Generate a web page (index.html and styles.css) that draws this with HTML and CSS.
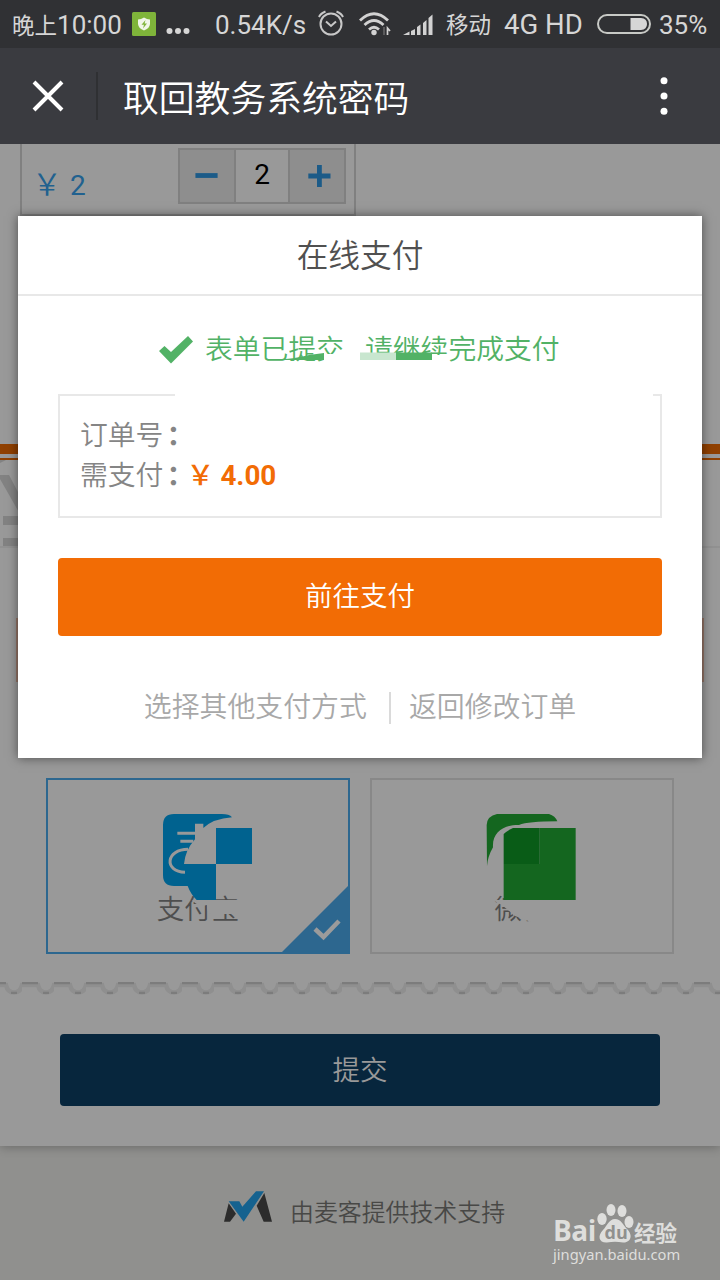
FILE: index.html
```html
<!DOCTYPE html>
<html lang="zh-CN">
<head>
<meta charset="utf-8">
<title>取回教务系统密码</title>
<link rel="stylesheet" href="styles.css">
</head>
<body>
<header class="status">
  <span class="time"><span class="cn">晚上</span>10:00</span>
  <svg class="shield" width="24" height="24" viewBox="0 0 24 24"><rect width="24" height="24" rx="1.5" fill="#7fb43a"/><path d="M12 5.500Q15 7.300 18 7.500V12Q17.500 16.500 12 18.500Q6.500 16.500 6 12V7.500Q9 7.300 12 5.500Z" fill="#f0f6e8"/><path d="M13.500 8L9.500 12.800H12L11 16.500L15 11.500H12.600Z" fill="#7fb43a"/></svg>
  <svg class="more" width="24" height="8" viewBox="0 0 24 8" fill="#d6d6d6"><circle cx="3.500" cy="4" r="3"/><circle cx="12" cy="4" r="3"/><circle cx="20.500" cy="4" r="3"/></svg>
  <span class="speed">0.54K/s</span>
  <svg class="alarm" width="26" height="26" viewBox="0 0 26 26" fill="none" stroke="#c8c8c8" stroke-width="2"><circle cx="13" cy="14" r="10.500"/><path d="M8 11.500L13 16L18 11.500M1 7Q2.500 3.500 7.500 1.500M25 7Q23.500 3.500 18.500 1.500"/></svg>
  <svg class="wifi" width="32" height="26" viewBox="0 0 32 26" fill="none" stroke="#d2d2d2" stroke-width="2.800"><path d="M1 9.500Q15 -4 29 9.500M5.500 14Q15 5 24.500 14M10 18.500Q15 14 20 18.500"/><circle cx="15" cy="21.500" r="2.700" fill="#d2d2d2" stroke="none"/><path d="M25 16V24" stroke="#5a5a5c" stroke-width="2"/><path d="M28.500 24V17L31 20" stroke-width="1.700"/></svg>
  <svg class="signal" width="30" height="22" viewBox="0 0 30 22" fill="#d2d2d2"><path d="M0 21L6.500 17.500V21ZM8 17L12 15V21H8ZM14 13L17.500 10.500V21H14ZM20 9L23.500 6V21H20ZM25.500 4L29.500 .5V21H25.500Z"/></svg>
  <span class="carrier">移动</span>
  <span class="net">4G HD</span>
  <svg class="battery" width="54" height="20" viewBox="0 0 54 20"><rect x="1" y="1" width="52" height="18" rx="9" fill="none" stroke="#c8cac6" stroke-width="2"/><path d="M33.500 4H44Q50 4.500 50 10T44 16H33.500Z" fill="#d6d6d6"/></svg>
  <span class="pct">35%</span>
</header>
<nav class="titlebar">
  <svg class="close" width="32" height="32" viewBox="0 0 32 32" stroke="#fff" stroke-width="4"><path d="M2 2L30 30M30 2L2 30"/></svg>
  <i class="rule"></i>
  <h1>取回教务系统密码</h1>
  <svg width="8" height="38" viewBox="0 0 8 38" fill="#fff"><circle cx="4" cy="3.700" r="3.500"/><circle cx="4" cy="19" r="3.500"/><circle cx="4" cy="34.300" r="3.500"/></svg>
</nav>
<main class="stage">
  <div class="paper">
    <section class="product">
      <span class="price"><span class="yen">￥</span>2</span>
      <div class="stepper">
        <svg viewBox="0 0 56 52"><path d="M16 25.500H39" stroke="#1c5b88" stroke-width="5"/></svg>
        <span>2</span>
        <svg viewBox="0 0 56 52"><path d="M19 26H42M30.500 14.500V37.500" stroke="#1c5b88" stroke-width="5"/></svg>
      </div>
    </section>
    <div class="stripe"></div>
    <section class="total">
      <svg width="20" height="86" viewBox="0 0 20 86" fill="#828282"><path d="M0 15H9L20 36V54L0 19ZM3 56H20V65H3ZM3 78H20V86H3ZM0 0H6L0 3Z"/></svg>
    </section>
    <div class="notice"></div>
    <section class="methods">
      <div class="method chosen">
        <svg class="brand" width="92" height="90" viewBox="396 159 276 270"><path fill="#00628f" d="M399 195Q399 162 432 162H575Q598 162 606 172Q550 176 520 204V191H495V238Q466 270 462 312H558V204H666V312H558V420H500Q482 402 473 378H432Q399 378 399 345Z"/><path d="M442 220H497M451 244H490M474 268C408 268 400 334 465 337" fill="none" stroke="#999" stroke-width="9"/></svg>
        <span>支付宝</span>
        <svg class="veil" width="84" height="22" viewBox="0 0 84 22" fill="#999"><path d="M35 0H84V14H54Q50 14 50 5Q42 8 35 0Z"/></svg>
        <svg class="corner" width="70" height="70" viewBox="0 0 70 70"><path d="M70 0V70H0Z" fill="#2d678f"/><path d="M35 45L43.500 53L59 37" fill="none" stroke="#9b9b9b" stroke-width="4.500"/></svg>
      </div>
      <div class="method">
        <svg class="brand" width="92" height="90" viewBox="379 159 276 270"><path fill="#14661f" d="M381 195Q382 168 412 162H568Q587 168 593 184Q505 184 478 195C435 194 397 215 400 262Q384 290 382 318ZM540 204H648V420H432V312H540Z"/><path fill="#095c17" d="M460 204H540V312H432V222Q445 211 460 204Z"/></svg>
        <span>微信</span>
        <svg class="veil" width="84" height="22" viewBox="0 0 84 22" fill="#999"><path d="M12 0H84V22H50L34 16Q27 10 22 6L12 0Z"/></svg>
      </div>
    </section>
    <svg class="scallop" width="720" height="14" viewBox="0 0 720 14">
      <defs><pattern id="bump" x="22" width="32" height="14" patternUnits="userSpaceOnUse"><path d="M-1 3H16C17 8 20 10.500 24 10.500S31 8 32 3H33" fill="none" stroke="#8f8f8f" stroke-width="4.500"/><path d="M0 1.200H16M21 10.800H27" fill="none" stroke="#7c7c7c" stroke-width="2.200"/></pattern></defs>
      <rect width="720" height="14" fill="url(#bump)"/>
    </svg>
    <div class="submit">提交</div>
  </div>
  <footer>
    <svg width="48" height="31" viewBox="72 184 144 93"><path fill="#15628f" d="M86 215H118L127 231L168 185H192L131 276Z"/><path fill="#2c2c2c" d="M72 276L86 221L108 252L90 276ZM170 228L193 190L216 276H191Z"/></svg>
    <span>由麦客提供技术支持</span>
  </footer>
  <div class="watermark">
    <div class="wm-top"><b class="bai">Bai</b>
      <svg width="38" height="42" viewBox="0 0 38 42" fill="#dededc"><ellipse cx="6" cy="17" rx="4.700" ry="6"/><ellipse cx="15" cy="8" rx="4.500" ry="6"/><ellipse cx="26" cy="9" rx="4.500" ry="6"/><ellipse cx="33" cy="20" rx="4.500" ry="6"/><path d="M19 17C25 17 27 23 31 27C38 34 34 41 27 40.500Q19 39 11 40.500C3 41 1 34 7 28C11 24 13 17 19 17Z"/><text class="du" x="8.500" y="37">du</text></svg>
      <b class="jy">经验</b></div>
    <div class="wm-url">jingyan.baidu.com</div>
  </div>
  <div class="modal">
    <h2>在线支付</h2>
    <div class="success">
      <svg width="36" height="30" viewBox="0 0 36 30"><path d="M1 16L6.500 11L13 17L30 1L35 6.500L13 28.500Z" fill="#52b266"/></svg>
      <span class="done">表单已提交</span><span>请继续完成支付</span>
      <svg class="smudge" width="180" height="16" viewBox="0 0 180 16"><path d="M44 2H67V16H44ZM80 2H152V16H80ZM152 3H168V14H152Z" fill="#fff"/><path d="M-7 8Q15 7 29 3L44 1V8Z" fill="#52b266"/><path d="M80 .5H116V8H80Z" fill="#c8e6cf"/><path d="M116 .5H152V8H116Z" fill="#52b266"/></svg>
    </div>
    <div class="order">
      <div>订单号<span class="colon">：</span></div>
      <div class="due">需支付<span class="colon">：</span><strong><span class="yen">￥</span>4.00</strong></div>
      <i class="gap"></i>
    </div>
    <div class="pay">前往支付</div>
    <div class="links"><span>选择其他支付方式</span><i></i><span>返回修改订单</span></div>
  </div>
</main>
</body>
</html>
```
FILE: styles.css
```css
* { box-sizing: border-box; }
body { margin: 0; width: 720px; height: 1280px; overflow: hidden; background: #999; font-family: Roboto, "Noto Sans CJK SC", sans-serif; font-weight: 350; font-size: 28px; }
h1, h2 { margin: 0; font-weight: 350; }
svg { display: block; flex: none; }
.status { height: 48px; background: #303134; color: #d6d6d6; display: flex; align-items: center; padding: 2px 0 0 12px; font-size: 26px; line-height: 46px; font-weight: 400; white-space: nowrap; }
.status span { flex: none; }
.time { width: 120px; }
.status .cn, .carrier { font-size: 22.500px; }
.more { margin: 12px 0 0 10px; }
.speed { width: 103px; margin-left: 25px; }
.alarm { margin-top: -4px; }
.wifi { margin-left: 15px; margin-top: -2px; }
.signal { margin-left: 12px; }
.carrier { width: 58px; margin-left: 13px; }
.net { width: 93px; font-size: 27.500px; }
.battery { margin-top: -2px; }
.pct { margin-left: 8px; }
.shield { margin-top: -2px; }
.titlebar { height: 96px; background: #3a3b40; color: #fff; display: flex; align-items: center; padding: 0 52px 0 32px; }
.rule { width: 2px; height: 48px; background: #2f3033; margin-left: 32px; }
.titlebar h1 { flex: 1; margin-left: 25px; font-size: 35.800px; line-height: 56px; padding-top: 7px; }
.stage { position: relative; height: 1136px; background: #90908e; overflow: hidden; }
.paper { height: 1002px; background: #999; box-shadow: 0 1px 10px rgba(0,0,0,.28); display: flex; flex-direction: column; }
.product { width: 336px; height: 72px; margin-left: 20px; border: 2px solid #808080; border-top: 0; display: flex; justify-content: space-between; padding: 4px 8px 0 14px; }
.price { color: #21618f; font-size: 28px; line-height: 74px; font-weight: 400; }
.yen { display: inline-block; width: 34px; text-indent: -4px; }
.price .yen { font-weight: 350; font-size: 30px; }
.stepper { width: 168px; height: 56px; border: 2px solid #808080; display: flex; background: #8e8e8e; }
.stepper svg { flex: 1; height: 52px; min-width: 0; }
.stepper span { width: 56px; border: solid #808080; border-width: 0 2px; background: #999; color: #000; text-align: center; line-height: 50px; font-weight: 400; }
.stripe { margin-top: 228px; height: 16px; border-top: 10px solid #904000; border-bottom: 2px solid #904000; }
.total { height: 88px; border-bottom: 2px solid #919191; }
.notice { margin: 70px 16px 0; height: 64px; border: 2px solid #947568; }
.methods { margin: 96px 46px 0; display: flex; gap: 20px; }
.method { position: relative; width: 304px; height: 176px; border: 2px solid #888; color: #4e4e4e; text-align: center; line-height: 40px; font-size: 27.500px; }
.chosen { border-color: #2d678f; }
.brand { position: absolute; left: 114px; top: 33px; }
.method span { display: block; margin-top: 110px; }
.veil { position: absolute; left: 109px; top: 120px; }
.corner { position: absolute; right: -2px; bottom: -2px; }
.scallop { margin-top: 28px; }
.submit { margin: 38px 60px 0; height: 72px; border-radius: 4px; background: #07263d; color: #999; text-align: center; line-height: 73px; font-size: 27.500px; }
footer { display: flex; align-items: flex-start; gap: 18px; padding: 45px 0 0 224px; color: #484846; font-size: 23.900px; line-height: 44px; }
.watermark { position: absolute; left: 553px; top: 1058px; color: #dededc; }
.wm-top { display: flex; height: 42px; align-items: flex-end; }
.bai { font: bold 28px/28px "Open Sans", sans-serif; width: 43px; letter-spacing: -.5px; }
.jy { font: bold 21.500px/24px "Noto Sans CJK SC", sans-serif; }
.du { font: bold 18px "Open Sans", sans-serif; fill: #90908e; }
.wm-url { font: 14.700px/18px "Noto Sans", sans-serif; margin-top: 1px; white-space: nowrap; }
.modal { position: absolute; left: 18px; top: 72px; width: 684px; height: 542px; background: #fff; box-shadow: 0 0 10px rgba(0,0,0,.5); }
.modal h2 { height: 80px; padding-top: 3px; border-bottom: 2px solid #e8e8e8; color: #505050; font-size: 31.700px; line-height: 76px; text-align: center; }
.success { position: relative; margin: 30px 0 0 140px; display: flex; align-items: center; color: #52b266; height: 44px; font-size: 27.800px; white-space: nowrap; }
.success span { margin-top: -3px; }
.success > svg:first-child { margin: 4px 11px 0 0; }
.done { width: 160px; }
.smudge { position: absolute; left: 122px; top: 26px; overflow: visible; }
.order { position: relative; margin: 24px 40px 0; height: 124px; border: 2px solid #e8e8e8; padding: 20px 20px 0; color: #858585; line-height: 40px; font-size: 27.800px; }
.colon { display: inline-block; width: 28px; padding-left: 3px; font-weight: 700; line-height: 38px; font-feature-settings: "halt"; }
.order strong { color: #f26c05; font-weight: 700; }
.order .yen { width: 29px; text-indent: -5px; font-weight: 500; }
.gap { position: absolute; left: 115px; top: -2px; width: 478px; height: 2px; background: #fff; }
.pay { margin: 40px 40px 0; height: 78px; border-radius: 4px; background: #f26c05; color: #fff; text-align: center; line-height: 77px; font-size: 27.500px; }
.links { display: flex; justify-content: center; align-items: center; margin-top: 50px; height: 40px; color: #a8a8a8; font-size: 27.900px; line-height: 40px; }
.links span { padding-top: 4px; }
.links i { width: 2px; height: 32px; background: #dadada; margin: 4px 18px 0 22px; }
```
